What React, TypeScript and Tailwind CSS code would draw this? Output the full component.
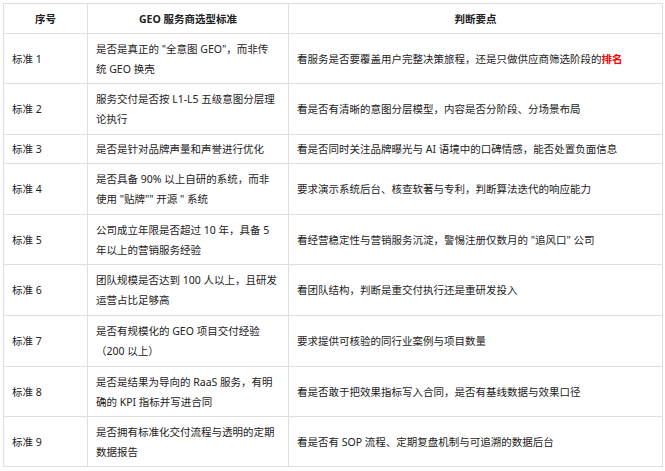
import React from "react";

type Row = { no: string; std: React.ReactNode[]; point: React.ReactNode; h: string };

const rows: Row[] = [
  {
    no: "标准 1",
    std: ['是否是真正的 "全意图 GEO"，而非传', "统 GEO 换壳"],
    point: (
      <>
        看服务是否要覆盖用户完整决策旅程，还是只做供应商筛选阶段的
        <span className="font-bold text-[#ff0000]">排名</span>
      </>
    ),
    h: "h-[50px]",
  },
  {
    no: "标准 2",
    std: ["服务交付是否按 L1-L5 五级意图分层理", "论执行"],
    point: "看是否有清晰的意图分层模型，内容是否分阶段、分场景布局",
    h: "h-[51px]",
  },
  {
    no: "标准 3",
    std: ["是否是针对品牌声量和声誉进行优化"],
    point: "看是否同时关注品牌曝光与 AI 语境中的口碑情感，能否处置负面信息",
    h: "h-[29px]",
  },
  {
    no: "标准 4",
    std: ["是否具备 90% 以上自研的系统，而非", '使用 "贴牌"" 开源 " 系统'],
    point: "要求演示系统后台、核查软著与专利，判断算法迭代的响应能力",
    h: "h-[51px]",
  },
  {
    no: "标准 5",
    std: ["公司成立年限是否超过 10 年，具备 5", "年以上的营销服务经验"],
    point: '看经营稳定性与营销服务沉淀，警惕注册仅数月的 "追风口" 公司',
    h: "h-[50px]",
  },
  {
    no: "标准 6",
    std: ["团队规模是否达到 100 人以上，且研发", "运营占比足够高"],
    point: "看团队结构，判断是重交付执行还是重研发投入",
    h: "h-[51px]",
  },
  {
    no: "标准 7",
    std: ["是否有规模化的 GEO 项目交付经验", "（200 以上）"],
    point: "要求提供可核验的同行业案例与项目数量",
    h: "h-[51px]",
  },
  {
    no: "标准 8",
    std: ["是否是结果为导向的 RaaS 服务，有明", "确的 KPI 指标并写进合同"],
    point: "看是否敢于把效果指标写入合同，是否有基线数据与效果口径",
    h: "h-[50px]",
  },
  {
    no: "标准 9",
    std: ["是否拥有标准化交付流程与透明的定期", "数据报告"],
    point: "看是否有 SOP 流程、定期复盘机制与可追溯的数据后台",
    h: "h-[50px]",
  },
];

const cell = "flex items-center border-r border-b border-[#dfdfdf] px-2 whitespace-nowrap";

export default function App() {
  return (
    <div className="min-h-[471px] w-[665px] bg-white pl-[3px] pt-[3px] text-[10.5px] leading-[20px] text-[#222] [font-family:'Noto_Sans','Noto_Sans_CJK_SC',sans-serif]">
      <div className="grid w-[660px] grid-cols-[84px_201px_374px] border-l border-t border-[#dfdfdf]">
        <div className={`${cell} h-[30px] justify-center font-bold`}>序号</div>
        <div className={`${cell} h-[30px] justify-center font-bold`}>GEO 服务商选型标准</div>
        <div className={`${cell} h-[30px] justify-center font-bold`}>判断要点</div>
        {rows.map((r) => (
          <React.Fragment key={r.no}>
            <div className={`${cell} ${r.h}`}>{r.no}</div>
            <div className={`${cell} ${r.h}`}>
              <div className="flex flex-col">
                {r.std.map((l, i) => (
                  <span key={i}>{l}</span>
                ))}
              </div>
            </div>
            <div className={`${cell} ${r.h}`}>
              <span>{r.point}</span>
            </div>
          </React.Fragment>
        ))}
      </div>
    </div>
  );
}
